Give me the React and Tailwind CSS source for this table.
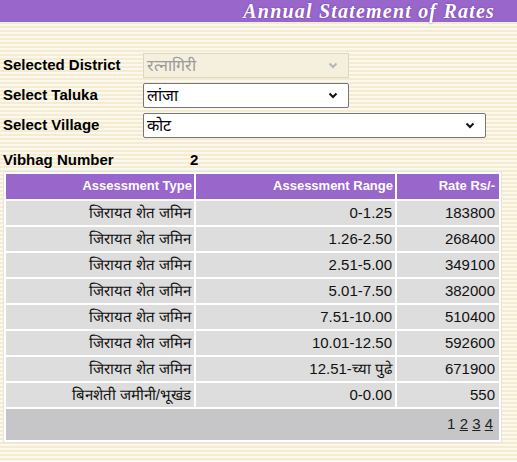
import React from 'react';

const ROWS = [
  ['जिरायत शेत जमिन', '0-1.25', '183800'],
  ['जिरायत शेत जमिन', '1.26-2.50', '268400'],
  ['जिरायत शेत जमिन', '2.51-5.00', '349100'],
  ['जिरायत शेत जमिन', '5.01-7.50', '382000'],
  ['जिरायत शेत जमिन', '7.51-10.00', '510400'],
  ['जिरायत शेत जमिन', '10.01-12.50', '592600'],
  ['जिरायत शेत जमिन', '12.51-च्या पुढे', '671900'],
  ['बिनशेती जमीनी/भूखंड', '0-0.00', '550'],
];

function Select({ value, width, disabled }) {
  return (
    <div
      className={
        'flex items-center justify-between border h-[25px] pl-[3px] pr-[10px] text-[16px] ' +
        (disabled
          ? 'border-[#dcd6c4] bg-[#f5f0de] text-[#9a9a9a]'
          : 'border-[#767676] bg-white text-black rounded-[2px]')
      }
      style={{ width }}
    >
      <span>{value}</span>
      <svg width="10" height="7" viewBox="0 0 10 7">
        <path
          d="M1.5 1.5 L5 5 L8.5 1.5"
          fill="none"
          stroke={disabled ? '#b5b5b5' : '#111'}
          strokeWidth="2"
        />
      </svg>
    </div>
  );
}

export default function App() {
  return (
    <div className="w-[517px] h-[462px] overflow-hidden font-['Liberation_Sans',Arial,sans-serif] bg-[repeating-linear-gradient(180deg,#fcf9ec_0px,#fcf9ec_2px,#f3ecd3_2px,#f3ecd3_4px)]">
      {/* Title bar */}
      <div className="h-[22px] bg-[#9966cc] flex items-center justify-end pr-[22px]">
        <span className="text-white italic font-bold text-[20px] leading-[20px] font-['Liberation_Serif',serif] tracking-[1.2px] [text-shadow:0_0_2px_#6a3fa0]">
          Annual Statement of Rates
        </span>
      </div>

      {/* Form */}
      <div className="pt-[31px] pl-[3px] flex flex-col gap-[5px]">
        <div className="flex items-center">
          <div className="w-[140px] text-[15px] font-bold text-black">Selected District</div>
          <Select value="रत्नागिरी" width={206} disabled />
        </div>
        <div className="flex items-center">
          <div className="w-[140px] text-[15px] font-bold text-black">Select Taluka</div>
          <Select value="लांजा" width={206} />
        </div>
        <div className="flex items-center">
          <div className="w-[140px] text-[15px] font-bold text-black">Select Village</div>
          <Select value="कोट" width={343} />
        </div>
        <div className="flex items-center mt-[6px]">
          <div className="w-[187px] text-[15px] font-bold text-black">Vibhag Number</div>
          <div className="text-[15px] font-bold text-black">2</div>
        </div>
      </div>

      {/* Rates table */}
      <div className="-mt-px ml-[3px] w-[499px] border border-[#e4e4e4] bg-white">
        <table className="w-full border-separate border-spacing-[2px] text-[15px] leading-[20px]">
          <thead>
            <tr>
              <th className="h-[25px] p-0 bg-[#9966cc] text-white text-[13px] font-bold text-right pr-[2px] w-[188px]">
                Assessment Type
              </th>
              <th className="h-[25px] p-0 bg-[#9966cc] text-white text-[13px] font-bold text-right pr-[2px] w-[199px]">
                Assessment Range
              </th>
              <th className="h-[25px] p-0 bg-[#9966cc] text-white text-[13px] font-bold text-right pr-[4px]">
                Rate Rs/-
              </th>
            </tr>
          </thead>
          <tbody>
            {ROWS.map((r, i) => (
              <tr key={i}>
                <td className="h-[24px] p-0 pt-px bg-[#dddddd] text-right pr-[3px] text-[#111]">{r[0]}</td>
                <td className="h-[24px] p-0 pt-px bg-[#dddddd] text-right pr-[3px] text-[#111]">{r[1]}</td>
                <td className="h-[24px] p-0 pt-px bg-[#dddddd] text-right pr-[4px] text-[#111]">{r[2]}</td>
              </tr>
            ))}
            <tr>
              <td colSpan={3} className="h-[31px] p-0 bg-[#c6c6c9] text-right pr-[6px] text-[#222]">
                <span>1 </span>
                <span className="underline">2</span> <span className="underline">3</span>{' '}
                <span className="underline">4</span>
              </td>
            </tr>
          </tbody>
        </table>
      </div>
    </div>
  );
}
